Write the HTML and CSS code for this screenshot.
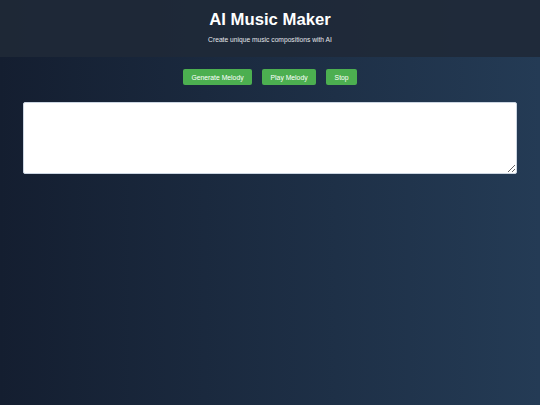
FILE: index.html
```html
<!DOCTYPE html>
<html lang="en">
<head>
    <meta charset="UTF-8">
    <meta name="viewport" content="width=device-width, initial-scale=1.0">
    <title>AI Music Maker</title>
    <link rel="stylesheet" href="styles.css">
</head>
<body>

    <header class="site-header">
        <h1>AI Music Maker</h1>
        <p class="subtitle">Create unique music compositions with AI</p>
    </header>

    <main class="content">
        <div class="controls">
            <button class="btn">Generate Melody</button>
            <button class="btn">Play Melody</button>
            <button class="btn">Stop</button>
        </div>

        <textarea class="melody-output" readonly></textarea>
    </main>

</body>
</html>
```

FILE: styles.css
```css
html {
    height: 100%;
}

body {
    margin: 0;
    min-height: 100%;
    font-family: "Liberation Sans", Arial, sans-serif;
    color: #ffffff;
    background: linear-gradient(to right, #141e30, #243b55);
}

.site-header {
    background: rgba(31, 41, 55, 0.9);
    text-align: center;
    padding: 11px 0 13px;
    height: 33px;
}

.site-header h1 {
    margin: 0;
    font-size: 16.7px;
    line-height: 18px;
    font-weight: bold;
}

.subtitle {
    margin: 7px 0 0;
    font-size: 6.7px;
    line-height: 8px;
    color: #e5e7eb;
}

.content {
    padding: 12px 23px 0;
}

.controls {
    display: flex;
    justify-content: center;
    gap: 10px;
}

.btn {
    background: #4caf50;
    color: #ffffff;
    border: none;
    border-radius: 2px;
    font-family: "Liberation Sans", Arial, sans-serif;
    font-size: 6.8px;
    height: 16px;
    padding: 0 8.5px;
    cursor: pointer;
}

.melody-output {
    display: block;
    box-sizing: border-box;
    width: 100%;
    height: 72px;
    margin-top: 17px;
    border: 1px solid #cbd5e1;
    border-radius: 2px;
    background: #ffffff;
}
```
